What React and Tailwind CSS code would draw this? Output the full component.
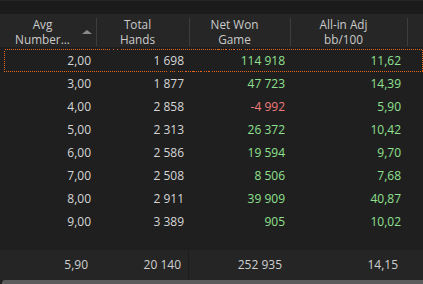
import React from 'react'

const rows = [
  { avg: '2,00', hands: '1 698', won: '114 918', bb: '11,62', neg: false, sel: true },
  { avg: '3,00', hands: '1 877', won: '47 723', bb: '14,39' },
  { avg: '4,00', hands: '2 858', won: '-4 992', bb: '5,90', neg: true },
  { avg: '5,00', hands: '2 313', won: '26 372', bb: '10,42' },
  { avg: '6,00', hands: '2 586', won: '19 594', bb: '9,70' },
  { avg: '7,00', hands: '2 508', won: '8 506', bb: '7,68' },
  { avg: '8,00', hands: '2 911', won: '39 909', bb: '40,87' },
  { avg: '9,00', hands: '3 389', won: '905', bb: '10,02' },
]

const cols = 'grid grid-cols-[97px_93px_101px_117px_1fr]'

function HeadCell({ top, bottom, sort, last }) {
  return (
    <div className="relative flex items-center justify-center h-full">
      <div className="flex flex-col items-center text-[#cbcbcb] text-[11.75px] pr-3 pt-[1px]">
        <span className="leading-[16px] h-[15px]">{top}</span>
        <span className="leading-[16px] h-[15px]">{bottom}</span>
      </div>
      {sort && (
        <div className="absolute right-[5px] top-[16px] w-0 h-0 border-l-[5px] border-r-[5px] border-b-[4px] border-l-transparent border-r-transparent border-b-[#8a8a8a]" />
      )}
      {!last && <div className="absolute right-0 top-[4px] bottom-[1px] w-px bg-[#3d3d3d]" />}
    </div>
  )
}

function Selection() {
  return (
    <svg className="absolute left-[4px] top-0 pointer-events-none" width="419" height="23" shapeRendering="crispEdges">
      <rect x="0.5" y="0.5" width="418" height="22" fill="none" stroke="#e3661a" strokeWidth="1" strokeDasharray="1 1" />
    </svg>
  )
}

export default function App() {
  return (
    <div
      className="w-[423px] h-[284px] overflow-hidden bg-[#1f1f1f] flex flex-col text-[12px]"
      style={{ fontFamily: '"Open Sans", "Noto Sans", sans-serif' }}
    >
      <div className="h-[14px] bg-[#1b1b1b] border-t border-[#262626]" />

      <div className={`${cols} h-[33px] bg-[#262626]`}>
        <HeadCell top="Avg" bottom="Number..." sort />
        <HeadCell top="Total" bottom="Hands" />
        <HeadCell top="Net Won" bottom="Game" />
        <HeadCell top="All-in Adj" bottom="bb/100" />
        <div />
      </div>

      <div className="h-[2px]" />

      <div className="flex flex-col">
        {rows.map((r, i) => (
          <div key={i} className={`relative ${cols} h-[23px] items-center text-right`}>
            <div className="text-[#d6d6d6] pr-[6px]">{r.avg}</div>
            <div className="text-[#d6d6d6] pr-[6px]">{r.hands}</div>
            <div className={`pr-[6px] ${r.neg ? 'text-[#ef7b7b]' : 'text-[#90e090]'}`}>{r.won}</div>
            <div className="text-[#90e090] pr-[7px]">{r.bb}</div>
            <div />
            {r.sel && <Selection />}
          </div>
        ))}
      </div>

      <div className="flex-1" />

      <div className={`${cols} h-[30px] items-center text-right bg-[#252525] text-[#d0d0d0]`}>
        <div className="pr-[9px]">5,90</div>
        <div className="relative pr-[9px] h-full flex items-center justify-end">
          20 140
          <div className="absolute right-[1px] top-0 bottom-0 w-px bg-[#1c1c1c]" />
        </div>
        <div className="pr-[9px]">252 935</div>
        <div className="pr-[10px]">14,15</div>
        <div />
      </div>

      <div className="h-[4px] bg-[#5c5c5c] ml-[2px] rounded-tl-[3px]" />
    </div>
  )
}
